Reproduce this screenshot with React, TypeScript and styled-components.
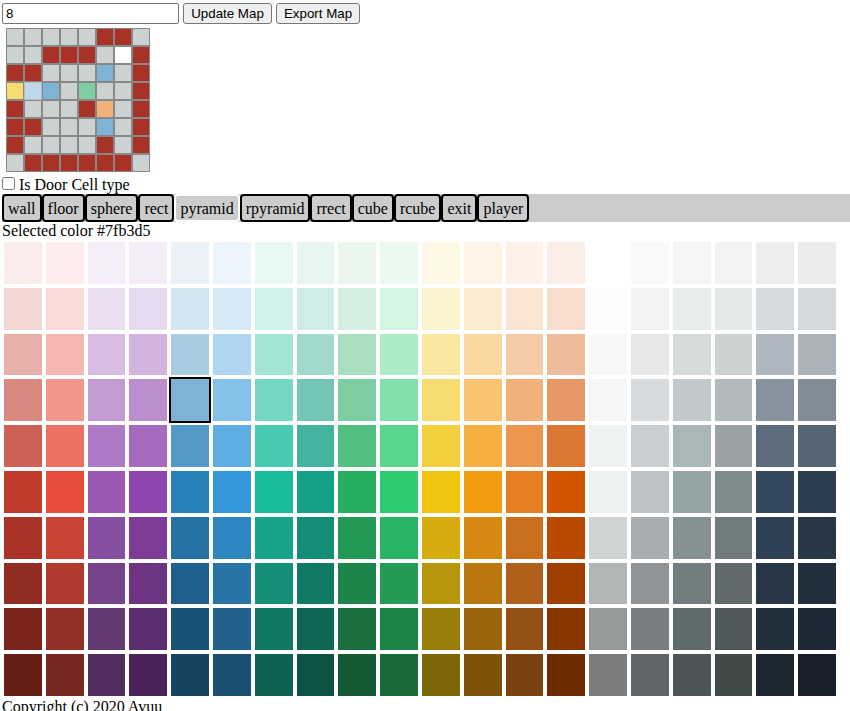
import React, { useState } from "react";
import styled, { createGlobalStyle } from "styled-components";

const GlobalStyle = createGlobalStyle`
  html, body { margin: 0; height: 100%; overflow: hidden; background: #fff; }
  body { font: 16px/18px "Liberation Serif", "Times New Roman", serif; color: #000; }
`;

const Page = styled.main`
  padding: 3px 0 0 2px;
`;

const Toolbar = styled.header`
  display: flex;
  gap: 4px;
  height: 21px;
`;

const SizeInput = styled.input`
  box-sizing: border-box;
  width: 177px;
  height: 21px;
  margin: 0;
  padding: 1px 3px;
  border: 1px solid #767676;
  border-radius: 2px;
  outline: none;
  font: 13.333px "Liberation Sans", Arial, sans-serif;
`;

const ToolButton = styled.button<{ $width: number }>`
  box-sizing: border-box;
  width: ${(p) => p.$width}px;
  height: 21px;
  margin: 0;
  padding: 0;
  border: 1px solid #767676;
  border-radius: 3px;
  background: #efefef;
  color: #000;
  font: 13.333px "Liberation Sans", Arial, sans-serif;
`;

const MapGrid = styled.div`
  display: grid;
  grid-template-columns: repeat(8, 18px);
  grid-auto-rows: 18px;
  margin: 4px 0 4px 4px;
`;

const MapCell = styled.div<{ $color: string; $active: boolean }>`
  border: 1px solid ${(p) => (p.$active ? "#bbb" : "#888")};
  background: ${(p) => p.$color};
`;

const DoorOption = styled.label`
  display: flex;
  align-items: flex-start;
  height: 18px;
`;

const Checkbox = styled.input`
  width: 13px;
  height: 13px;
  margin: 1px 4px 0 0;
`;

const TabBar = styled.nav`
  display: flex;
  height: 28px;
  background: #ccc;
`;

const Tab = styled.div<{ $selected: boolean }>`
  box-sizing: border-box;
  height: 28px;
  padding: 4px;
  border: 2px solid ${(p) => (p.$selected ? "#fff" : "#000")};
  border-radius: 4px;
  cursor: pointer;
`;

const Line = styled.div`
  height: 18px;
`;

const Palette = styled.div`
  display: grid;
  grid-template-columns: repeat(20, 41.8px);
  grid-auto-rows: 45.8px;
`;

const Swatch = styled.div<{ $color: string; $selected: boolean }>`
  border: 2px solid ${(p) => (p.$selected ? "#000" : "#fff")};
  background: ${(p) => p.$color};
`;

const fills: Record<string, string> = {
  f: "#ccd1d1",
  w: "#a93226",
  e: "#ffffff",
  p: "#7fb3d5",
  y: "#f7dc6f",
  h: "#bfd7ea",
  g: "#7dcea0",
  o: "#f0b27a",
};

const level = [
  "fffffwwf",
  "ffwwwfew",
  "wwfffpfw",
  "yhpfgffw",
  "wfffwofw",
  "wwfffpfw",
  "wffffwfw",
  "fwwwwwwf",
];

const tabs = ["wall", "floor", "sphere", "rect", "pyramid", "rpyramid", "rrect", "cube", "rcube", "exit", "player"];

const colors = [
  "f9ebea fdedec f5eef8 f4ecf7 eaf2f8 ebf5fb e8f8f5 e8f6f3 e9f7ef eafaf1 fef9e7 fef5e7 fdf2e9 fbeee6 ffffff f8f9f9 f4f6f6 f2f4f4 ebedef eaecee",
  "f2d7d5 fadbd8 ebdef0 e8daef d4e6f1 d6eaf8 d1f2eb d0ece7 d4efdf d5f5e3 fcf3cf fdebd0 fae5d3 f6ddcc fbfcfc f2f3f4 eaeded e5e8e8 d6dbdf d5d8dc",
  "e6b0aa f5b7b1 d7bde2 d2b4de a9cce3 aed6f1 a3e4d7 a2d9ce a9dfbf abebc6 f9e79f fad7a0 f5cba7 edbb99 f7f9f9 e5e7e9 d5dbdb ccd1d1 aeb6bf abb2b9",
  "d98880 f1948a c39bd3 bb8fce 7fb3d5 85c1e9 76d7c4 73c6b6 7dcea0 82e0aa f7dc6f f8c471 f0b27a e59866 f4f6f7 d7dbdd bfc9ca b2babb 85929e 808b96",
  "cd6155 ec7063 af7ac5 a569bd 5499c7 5dade2 48c9b0 45b39d 52be80 58d68d f4d03f f5b041 eb984e dc7633 f0f3f4 cacfd2 aab7b8 99a3a4 5d6d7e 566573",
  "c0392b e74c3c 9b59b6 8e44ad 2980b9 3498db 1abc9c 16a085 27ae60 2ecc71 f1c40f f39c12 e67e22 d35400 ecf0f1 bdc3c7 95a5a6 7f8c8d 34495e 2c3e50",
  "a93226 cb4335 884ea0 7d3c98 2471a3 2e86c1 17a589 138d75 229954 28b463 d4ac0d d68910 ca6f1e ba4a00 d0d3d4 a6acaf 839192 707b7c 2e4053 273746",
  "922b21 b03a2e 76448a 6c3483 1f618d 2874a6 148f77 117a65 1e8449 239b56 b7950b b9770e af601a a04000 b3b6b7 909497 717d7e 616a6b 283747 212f3d",
  "7b241c 943126 633974 5b2c6f 1a5276 21618c 117864 0e6655 196f3d 1d8348 9a7d0a 9c640c 935116 873600 979a9a 797d7f 5f6a6a 515a5a 212f3c 1c2833",
  "641e16 78281f 512e5f 4a235a 154360 1b4f72 0e6251 0b5345 145a32 186a3b 7d6608 7e5109 784212 6e2c00 7b7d7d 626567 4d5656 424949 1b2631 17202a",
].flatMap((row) => row.split(" ").map((hex) => `#${hex}`));

export default function App() {
  const [size, setSize] = useState("8");
  const [tab, setTab] = useState("pyramid");
  const [color, setColor] = useState("#7fb3d5");

  return (
    <>
      <GlobalStyle />
      <Page>
        <Toolbar>
          <SizeInput value={size} onChange={(e) => setSize(e.target.value)} />
          <ToolButton $width={89}>Update Map</ToolButton>
          <ToolButton $width={84}>Export Map</ToolButton>
        </Toolbar>
        <MapGrid>
          {level.flatMap((row, y) =>
            [...row].map((kind, x) => <MapCell key={`${x}-${y}`} $color={fills[kind]} $active={kind === "h"} />)
          )}
        </MapGrid>
        <DoorOption>
          <Checkbox type="checkbox" />
          Is Door Cell type
        </DoorOption>
        <TabBar>
          {tabs.map((name) => (
            <Tab key={name} $selected={name === tab} onClick={() => setTab(name)}>
              {name}
            </Tab>
          ))}
        </TabBar>
        <Line>Selected color {color}</Line>
        <Palette>
          {colors.map((c) => (
            <Swatch key={c} $color={c} $selected={c === color} onClick={() => setColor(c)} />
          ))}
        </Palette>
        <Line>Copyright (c) 2020 Avuu</Line>
      </Page>
    </>
  );
}
